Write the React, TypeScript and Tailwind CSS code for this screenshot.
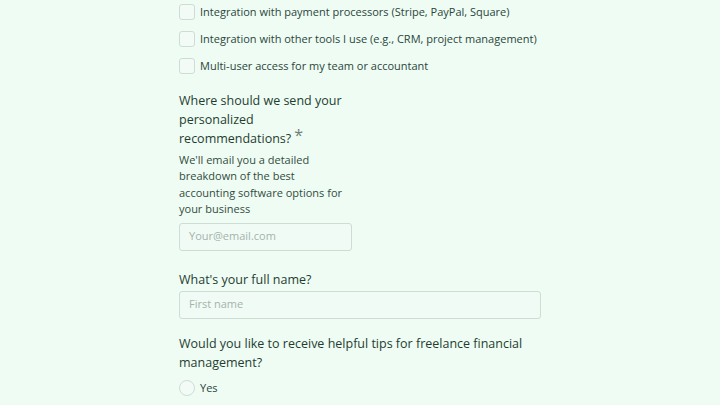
import React from "react";

const font = { fontFamily: '"Open Sans", "Noto Sans", sans-serif' };

function Check({ label }: { label: string }) {
  return (
    <label className="flex items-center gap-[5px] h-[27px]">
      <span className="shrink-0 w-4 h-4 rounded-[3px] border border-[#cfdcd5] bg-[#f3fbf6]" />
      <span className="text-[11px] text-[#2a463a] whitespace-nowrap">{label}</span>
    </label>
  );
}

export default function App() {
  return (
    <div className="w-[720px] h-[405px] overflow-hidden bg-[#effcf4]" style={font}>
      <div className="ml-[179px] w-[362px] -mt-[1.5px]">
        <div className="flex flex-col">
          <Check label="Integration with payment processors (Stripe, PayPal, Square)" />
          <Check label="Integration with other tools I use (e.g., CRM, project management)" />
          <Check label="Multi-user access for my team or accountant" />
        </div>

        <div className="mt-[11px] w-[172px]">
          <div className="text-[12.5px] leading-[19px] font-medium text-[#1f3d31]">
            Where should we send your personalized recommendations?
            <span className="relative -top-[2px] ml-[3px] text-[#6f7f78] text-[16px] leading-none font-normal">*</span>
          </div>
          <div className="mt-[4px] text-[11px] leading-[16.5px] text-[#324c40]">
            We'll email you a detailed breakdown of the best accounting software options for your business
          </div>
        </div>
        <div className="mt-[5px] w-[173px] h-[28px] rounded-[3px] border border-[#cfdcd5] bg-[#f1fbf5] flex items-center px-[9px] text-[11px] text-[#a3b3ab]">
          Your@email.com
        </div>

        <div className="mt-[19px] text-[12.5px] leading-[19px] font-medium text-[#1f3d31]">
          What's your full name?
        </div>
        <div className="mt-[2px] w-[362px] h-[28px] rounded-[3px] border border-[#cfdcd5] bg-[#f1fbf5] flex items-center px-[9px] text-[11px] text-[#a3b3ab]">
          First name
        </div>

        <div className="mt-[15.5px] text-[12.5px] leading-[19px] font-medium text-[#1f3d31]">
          Would you like to receive helpful tips for freelance financial management?
        </div>
        <label className="mt-[8px] flex items-center gap-[5px] h-[16px]">
          <span className="w-4 h-4 rounded-full border border-[#cfdcd5] bg-[#f3fbf6]" />
          <span className="text-[11px] text-[#2a463a]">Yes</span>
        </label>
      </div>
    </div>
  );
}
